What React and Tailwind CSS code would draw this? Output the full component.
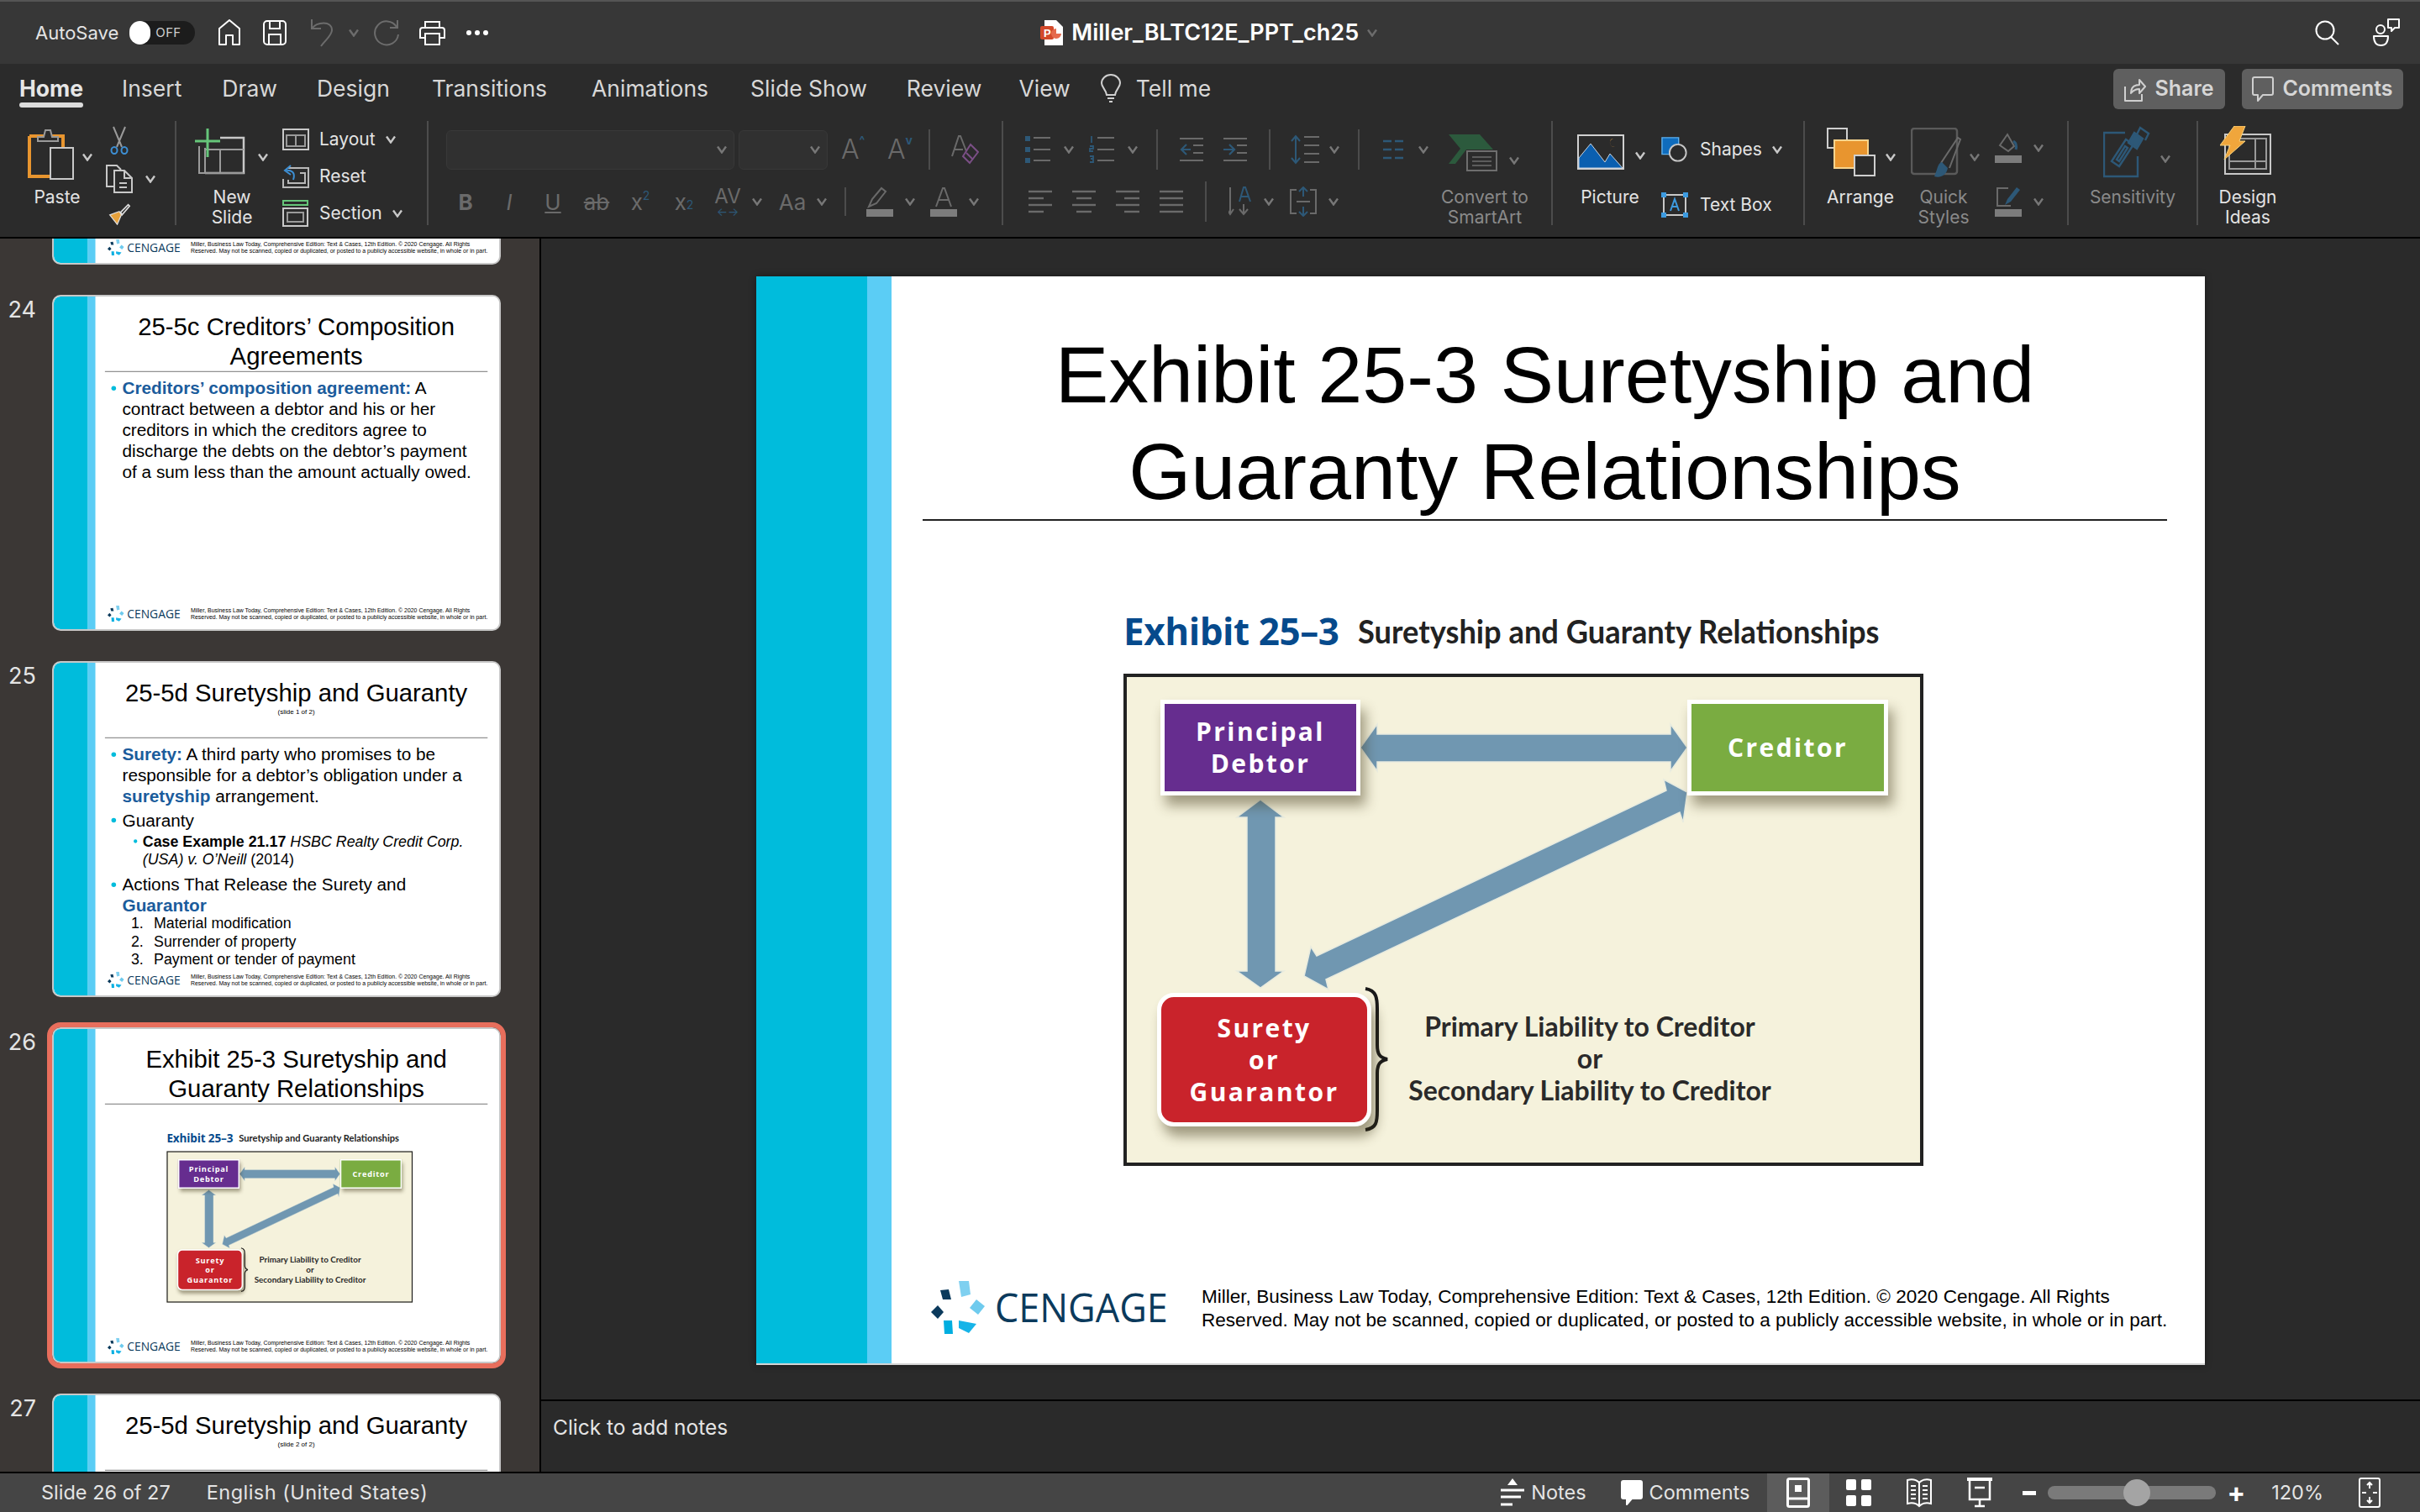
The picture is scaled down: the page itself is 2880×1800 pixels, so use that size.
import React from "react";

const ui = "font-['Inter',sans-serif]";

/* ---------- small icons ---------- */
const Chev = ({ className = "text-[#c8c8c8]" }) => (
  <svg className={`w-[12px] h-[10px] shrink-0 ${className}`} viewBox="0 0 12 10" fill="none" stroke="currentColor" strokeWidth="2.4"><path d="M1 1.5 6 8.5 11 1.5" /></svg>
);
const Cell = ({ className = "", children }) => (
  <div className={`flex items-center justify-center shrink-0 ${className}`}>{children}</div>
);
const Vr = ({ className = "" }) => <div className={`w-[2px] shrink-0 bg-[#4c4c4c] ${className}`} />;

const Lines = ({ rows, className = "text-[#6a6a6a]" }) => (
  <svg className={`w-[30px] h-[30px] ${className}`} viewBox="0 0 30 30" fill="none" stroke="currentColor" strokeWidth="2.4">
    {rows.map((r, i) => <path key={i} d={`M${r[0]} ${3 + i * 8}H${r[1]}`} />)}
  </svg>
);

const Home = () => (
  <svg className="w-[28px] h-[32px] text-white" viewBox="0 0 28 32" fill="none" stroke="currentColor" strokeWidth="2"><path d="M2 30V11L14 1l12 10v19h-8V19h-8v11z" strokeLinejoin="round" /></svg>
);
const Save = () => (
  <svg className="w-[28px] h-[30px] text-white" viewBox="0 0 28 30" fill="none" stroke="currentColor" strokeWidth="2"><rect x="1" y="1" width="26" height="28" rx="4" /><path d="M8 1v9h12V1M7 29V17h14v12" /></svg>
);
const Undo = () => (
  <svg className="w-[28px] h-[34px] text-[#6c6c6c]" viewBox="0 0 28 34" fill="none" stroke="currentColor" strokeWidth="2"><path d="M2 1v11h11M2 12C8 4 26 2 26 14c0 6-8 12-13 19" /></svg>
);
const Redo = () => (
  <svg className="w-[32px] h-[32px] text-[#6c6c6c]" viewBox="0 0 32 32" fill="none" stroke="currentColor" strokeWidth="2"><path d="M28 9A14 14 0 1 0 30 18M29 1v9h-9" /></svg>
);
const Print = () => (
  <svg className="w-[33px] h-[30px] text-white" viewBox="0 0 33 30" fill="none" stroke="currentColor" strokeWidth="2"><path d="M8 9V2h17v7M8 21H2V12q0-3 3-3h23q3 0 3 3v9h-6" /><rect x="8" y="16" width="17" height="13" /></svg>
);
const Search = () => (
  <svg className="w-[30px] h-[30px] text-white" viewBox="0 0 30 30" fill="none" stroke="currentColor" strokeWidth="2"><circle cx="12" cy="12" r="10.5" /><path d="M19 20l9 9" /></svg>
);
const Collab = () => (
  <svg className="w-[34px] h-[34px] text-white" viewBox="0 0 34 34" fill="none" stroke="currentColor" strokeWidth="2"><circle cx="10" cy="13" r="5" /><path d="M2 21h17q0 11-8.500 11T2 21zM19 1h13v10h-5l-4 4v-4h-4z" strokeLinejoin="round" /></svg>
);
const PptIcon = () => (
  <svg className="w-[27px] h-[30px]" viewBox="0 0 27 30">
    <path d="M5 0h14l8 8v22H5z" fill="#fff" />
    <rect x="0" y="7" width="16" height="16" rx="2" fill="#d2492a" />
    <text x="4" y="20" fontSize="13" fontWeight="700" fill="#fff" fontFamily="Liberation Sans">P</text>
    <path d="M19 10a6 6 0 1 0 6 6h-6z" fill="#e56a4c" />
  </svg>
);
const Bulb = () => (
  <svg className="w-[24px] h-[36px] text-[#d0d0d0]" viewBox="0 0 24 36" fill="none" stroke="currentColor" strokeWidth="2"><path d="M7 25C6 18 1 16 1 11a11 10 0 0 1 22 0c0 5-5 7-6 14z" /><path d="M8 29h8M10 33h4" /></svg>
);
const ShareIcon = () => (
  <svg className="w-[26px] h-[30px] text-[#cfcfcf]" viewBox="0 0 26 30" fill="none" stroke="currentColor" strokeWidth="2"><path d="M1 12v17h20v-8M8 20c0-7 4-10 10-10V4l7 8-7 8v-5c-4 0-7 1-10 5z" strokeLinejoin="round" /></svg>
);
const CommentIcon = ({ className = "w-[26px] h-[30px] text-[#cfcfcf]", solid }) => (
  <svg className={className} viewBox="0 0 26 30" fill={solid ? "currentColor" : "none"} stroke="currentColor" strokeWidth="2"><path d="M3 1h20q2 0 2 2v17q0 2-2 2H13l-6 7v-7H3q-2 0-2-2V3q0-2 2-2z" strokeLinejoin="round" /></svg>
);

/* ribbon icons */
const PasteIcon = () => (
  <svg className="w-[56px] h-[62px] shrink-0" viewBox="0 0 56 62" fill="none">
    <path d="M2 10h40v54M2 10v48h26" stroke="#e8952f" strokeWidth="4" />
    <path d="M12 16v-5h7l2-8h6l2 8h7v5z" fill="#2b2b2b" stroke="#9a9a9a" strokeWidth="2" />
    <rect x="27" y="24" width="27" height="37" fill="#2b2b2b" stroke="#c8c8c8" strokeWidth="2" />
  </svg>
);
const Scissors = () => (
  <svg className="w-[24px] h-[34px]" viewBox="0 0 24 34" fill="none" strokeWidth="2"><path d="M5 1l10 24M19 1L9 25" stroke="#9a9a9a" /><ellipse cx="6" cy="29" rx="3.500" ry="4" stroke="#3d8fd4" /><ellipse cx="18" cy="29" rx="3.500" ry="4" stroke="#3d8fd4" /></svg>
);
const CopyIcon = () => (
  <svg className="w-[32px] h-[34px] text-[#c8c8c8]" viewBox="0 0 32 34" fill="none" stroke="currentColor" strokeWidth="2"><path d="M10 26H1V1h12l5 5" /><path d="M10 7h12l9 9v17H10zM22 7v9h9M16 22h9M16 27h9" /></svg>
);
const BrushIcon = () => (
  <svg className="w-[32px] h-[32px]" viewBox="0 0 32 32" fill="none"><path d="M2 17l14-5 3 5-6 14z" fill="#e8a23c" stroke="#e0e0e0" strokeWidth="1.500" /><path d="M18 13l11-11 2 2-11 13z" stroke="#e0e0e0" strokeWidth="2" /></svg>
);
const NewSlideIcon = () => (
  <svg className="w-[62px] h-[56px] shrink-0" viewBox="0 0 62 56" fill="none">
    <path d="M12 54h46V12H30M4 54" stroke="#c8c8c8" strokeWidth="2.500" />
    <path d="M5 22v32h53M12 24v30M12 26h46M30 26v28" stroke="#9a9a9a" strokeWidth="2" />
    <path d="M15 1v34M0 16h30" stroke="#66c67a" strokeWidth="3" />
  </svg>
);
const LayoutIcon = () => (
  <svg className="w-[32px] h-[26px] text-[#c8c8c8]" viewBox="0 0 32 26" fill="none" stroke="currentColor" strokeWidth="2"><rect x="1" y="1" width="30" height="24" /><path d="M5 8h22v13H5zM16 8v13" stroke="#9a9a9a" /></svg>
);
const ResetIcon = () => (
  <svg className="w-[32px] h-[28px]" viewBox="0 0 32 28" fill="none" strokeWidth="2"><path d="M7 4h24v23H1V17M21 10h6v12H7v-4" stroke="#b8b8b8" /><path d="M10 1L3 7l7 5M3 7c8-1 13 2 10 11" stroke="#3d8fd4" /></svg>
);
const SectionIcon = () => (
  <svg className="w-[32px] h-[32px]" viewBox="0 0 32 32" fill="none" strokeWidth="2"><rect x="1" y="1" width="29" height="5" stroke="#66c67a" /><rect x="1" y="10" width="29" height="21" stroke="#c8c8c8" /><rect x="6" y="15" width="19" height="11" stroke="#9a9a9a" /></svg>
);
const ClearFmt = () => (
  <svg className="w-[34px] h-[36px]" viewBox="0 0 34 36" fill="none" strokeWidth="2"><path d="M2 26L10 2h2l7 18M5 18h10" stroke="#6a6a6a" /><path d="M24 12l9 9-10 13-8-8z" stroke="#7b4f86" /><path d="M19 22l8 8" stroke="#7b4f86" /></svg>
);
const Highlighter = () => (
  <svg className="w-[32px] h-[36px]" viewBox="0 0 32 36" fill="none"><path d="M3 24l4-9L18 2l5 4-11 14z" stroke="#6a6a6a" strokeWidth="2" /><rect y="27" width="32" height="9" fill="#7c7c7c" /></svg>
);
const FontColor = () => (
  <svg className="w-[32px] h-[36px]" viewBox="0 0 32 36" fill="none"><path d="M7 24L15 2h2l8 22M10 16h12" stroke="#6a6a6a" strokeWidth="2" /><rect y="27" width="32" height="9" fill="#7c7c7c" /></svg>
);
const Bullets = () => (
  <svg className="w-[30px] h-[34px]" viewBox="0 0 30 34"><g fill="#2d5877"><rect width="6" height="6" y="1" /><rect width="6" height="6" y="14" /><rect width="6" height="6" y="27" /></g><path d="M10 3h20M10 17h20M10 30h20" stroke="#6a6a6a" strokeWidth="2.200" /></svg>
);
const Numbers = () => (
  <svg className="w-[30px] h-[34px]" viewBox="0 0 30 34"><path d="M3 1v8M1 13h4v3H1v3h4M1 25h4v3H2h3v4H1" stroke="#2d5877" strokeWidth="1.800" fill="none" /><path d="M10 3h20M10 17h20M10 30h20" stroke="#6a6a6a" strokeWidth="2.200" /></svg>
);
const Indent = ({ flip }) => (
  <svg className="w-[28px] h-[30px]" viewBox="0 0 28 30" fill="none"><path d="M0 2h28M16 10h12M16 19h12M0 28h28" stroke="#6a6a6a" strokeWidth="2.200" /><path d={flip ? "M0 15h12M7 9l6 6-6 6" : "M13 15H2M8 9l-6 6 6 6"} stroke="#2d5877" strokeWidth="2.200" /></svg>
);
const LineSpacing = () => (
  <svg className="w-[34px] h-[36px]" viewBox="0 0 34 36" fill="none"><path d="M6 3v30M1 8l5-6 5 6M1 28l5 6 5-6" stroke="#2d5877" strokeWidth="2" /><path d="M16 3h18M16 13h18M16 23h18M16 33h18" stroke="#6a6a6a" strokeWidth="2.200" /></svg>
);
const Columns = () => (
  <svg className="w-[24px] h-[26px]" viewBox="0 0 24 26" fill="none" stroke="#2d5877" strokeWidth="2.400"><path d="M0 3h10M14 3h10M0 13h10M14 13h10M0 23h10M14 23h10" /></svg>
);
const SmartArt = () => (
  <svg className="w-[58px] h-[44px] shrink-0" viewBox="0 0 58 44" fill="none">
    <polygon points="0,0 37,0 53,18 21,18 8,35 0,35 14,17" fill="#2c5a3d" />
    <rect x="22" y="20" width="35" height="23" fill="#2b2b2b" stroke="#6e6e6e" strokeWidth="2" />
    <path d="M28 27h23M28 32h23M28 37h23" stroke="#6e6e6e" strokeWidth="1.600" />
  </svg>
);
const TextDir = () => (
  <svg className="w-[28px] h-[36px]" viewBox="0 0 28 36" fill="none"><path d="M2 1v32M-2 27l4 6 4-6M18 21v12M13 27l5 6 5-6" stroke="#6a6a6a" strokeWidth="2" /><path d="M13 18L18 1h2l6 17M15 12h9" stroke="#2d5877" strokeWidth="2" /></svg>
);
const AlignText = () => (
  <svg className="w-[32px] h-[36px]" viewBox="0 0 32 36" fill="none"><path d="M8 4H1v28h7M24 4h7v28h-7M8 18h16" stroke="#6a6a6a" strokeWidth="2" /><path d="M16 1v11M11 6l5-5 5 5M16 24v11M11 30l5 5 5-5" stroke="#2d5877" strokeWidth="2" /></svg>
);
const Picture = () => (
  <svg className="w-[56px] h-[42px] shrink-0" viewBox="0 0 56 42">
    <rect x="1" y="1" width="54" height="40" fill="#2b2b2b" stroke="#d0d0d0" strokeWidth="2" />
    <path d="M2 40V28L16 11l17 22 6-10 15 17z" fill="#0a5fb0" stroke="#c8d4e0" strokeWidth="1" />
    <path d="M43 5a5 5 0 0 0 2 10q-6 0-6-5t4-5z" fill="#eda64a" />
  </svg>
);
const Shapes = () => (
  <svg className="w-[34px] h-[32px]" viewBox="0 0 34 32"><path d="M1 1h21v21H1z" fill="#0f6cbd" stroke="#5db0ee" strokeWidth="1.500" /><circle cx="21" cy="20" r="10.500" fill="#2b2b2b" stroke="#c8c8c8" strokeWidth="2" /></svg>
);
const TextBoxIcon = () => (
  <svg className="w-[32px] h-[30px]" viewBox="0 0 32 30" fill="none"><rect x="3" y="3" width="26" height="24" stroke="#c8c8c8" strokeWidth="2" /><g fill="#3d9be0"><rect width="6" height="6" /><rect x="26" width="6" height="6" /><rect y="24" width="6" height="6" /><rect x="26" y="24" width="6" height="6" /></g><path d="M11 22l5-14 5 14M13 17h6" stroke="#3d9be0" strokeWidth="2" /></svg>
);
const Arrange = () => (
  <svg className="w-[58px] h-[58px] shrink-0" viewBox="0 0 58 58"><rect x="1" y="1" width="23" height="23" fill="#2b2b2b" stroke="#cfcfcf" strokeWidth="2" /><rect x="9" y="15" width="40" height="33" fill="#e8952f" stroke="#f6d48e" strokeWidth="2" /><rect x="33" y="33" width="24" height="24" fill="#2b2b2b" stroke="#cfcfcf" strokeWidth="2" /></svg>
);
const QuickStyles = () => (
  <svg className="w-[62px] h-[62px] shrink-0" viewBox="0 0 62 62" fill="none"><rect x="1" y="1" width="54" height="54" rx="3" stroke="#5a5a5a" strokeWidth="2.500" /><path d="M36 42l20-30 3 2-13 34" stroke="#6a6a6a" strokeWidth="2" /><path d="M28 58c6 2 14 0 16-10l-7-7c-5 1-5 8-9 17z" fill="#2d5877" /></svg>
);
const FillIcon = () => (
  <svg className="w-[32px] h-[36px]" viewBox="0 0 32 36" fill="none"><path d="M6 15l9-13 8 14-7 6z" stroke="#6a6a6a" strokeWidth="2" /><path d="M22 10q5 3 3 10" stroke="#2d5877" strokeWidth="3" /><rect y="27" width="32" height="9" fill="#7c7c7c" /></svg>
);
const PenIcon = () => (
  <svg className="w-[32px] h-[36px]" viewBox="0 0 32 36" fill="none"><path d="M16 2H3v21h16" stroke="#6a6a6a" strokeWidth="2" /><path d="M12 22l3-7L26 1l4 3-11 14z" fill="#2d5877" /><rect y="27" width="32" height="9" fill="#7c7c7c" /></svg>
);
const Sensitivity = () => (
  <svg className="w-[56px] h-[62px] shrink-0" viewBox="0 0 56 62" fill="none" stroke="#2d5877" strokeWidth="2.400">
    <path d="M26 8H1v52h40V36" />
    <path d="M10 42l17-26 9 6-17 26z M16 40l10-16 3 2-10 16z" />
    <path d="M30 20l7-12 10 7-7 12z" fill="#2d5877" />
    <path d="M40 10l4-8 10 7-4 8" />
  </svg>
);
const DesignIdeas = () => (
  <svg className="w-[62px] h-[58px]" viewBox="0 0 62 58" fill="none">
    <rect x="6" y="10" width="54" height="47" stroke="#c8c8c8" strokeWidth="2" />
    <path d="M11 15h44v36H11zM42 15v36M11 42h44" stroke="#9a9a9a" strokeWidth="2" />
    <path d="M17 0h13l-7 18h7L5 40l7-17H0z" fill="#f0a63c" stroke="#f7d27e" strokeWidth="1" />
  </svg>
);

/* status bar icons */
const NotesIcon = () => (
  <svg className="w-[28px] h-[34px] text-white" viewBox="0 0 28 34" fill="currentColor"><path d="M14 0l6 8H8z" /><path d="M0 14h28M0 22h24M0 31h14" stroke="currentColor" strokeWidth="3" fill="none" /></svg>
);
const NormalIcon = () => (
  <svg className="w-[28px] h-[36px] text-white" viewBox="0 0 28 36" fill="none" stroke="currentColor" strokeWidth="3"><rect x="1.500" y="1.500" width="25" height="33" rx="2" /><path d="M1 25h26" /><rect x="10" y="9" width="8" height="8" fill="currentColor" stroke="none" /></svg>
);
const SorterIcon = () => (
  <svg className="w-[30px] h-[32px] text-white" viewBox="0 0 30 32" fill="currentColor"><rect width="12" height="13" rx="2" /><rect x="18" width="12" height="13" rx="2" /><rect y="19" width="12" height="13" rx="2" /><rect x="18" y="19" width="12" height="13" rx="2" /></svg>
);
const ReadIcon = () => (
  <svg className="w-[30px] h-[36px] text-white" viewBox="0 0 30 36" fill="none" stroke="currentColor" strokeWidth="2"><path d="M15 6C11 2 5 2 1 3v28c4-1 10-1 14 3 4-4 10-4 14-3V3c-4-1-10-1-14 3zM15 6v28M5 10h6M5 15h6M5 20h6M5 25h6M19 10h6M19 15h6M19 20h6M19 25h6" /></svg>
);
const ShowIcon = () => (
  <svg className="w-[30px] h-[36px] text-white" viewBox="0 0 30 36" fill="none" stroke="currentColor" strokeWidth="2.500"><path d="M0 2h30" strokeWidth="4" /><path d="M3 2v24h24V2M15 26v8M9 34h12" /><path d="M9 12h12" /></svg>
);
const FitIcon = () => (
  <svg className="w-[26px] h-[36px] text-white" viewBox="0 0 26 36" fill="none" stroke="currentColor" strokeWidth="2"><rect x="1" y="1" width="24" height="34" rx="2" /><path d="M13 6v7M10 9l3-3 3 3M13 30v-7M10 27l3 3 3-3M4 18h5M17 18h5" /></svg>
);

/* ---------- cengage footer ---------- */
const Logo = () => (
  <svg className="w-[64px] h-[63px] shrink-0" viewBox="0 0 64 63">
    <path d="M33 0l12 0 2 16-11 3z" fill="#7fd0f0" />
    <path d="M11 11l10-1 3 12-10 0z" fill="#0b3a5c" />
    <path d="M54 22l10 8-8 10-10-8z" fill="#6fcbee" />
    <path d="M8 29l7 8-7 8-8-8z" fill="#0b3a5c" />
    <path d="M15 47h10l1 16-10 0z" fill="#00aee0" />
    <path d="M33 47l21 4-9 11-12-6z" fill="#17b4e8" />
  </svg>
);

const Footer = () => (
  <div className="h-[134px] shrink-0 flex items-center pl-[10px]">
    <Logo />
    <div className="ml-[12px] w-[205px] text-[47px] leading-none text-[#0b3a5c] font-['Open_Sans',sans-serif] scale-x-[0.956] origin-left whitespace-nowrap">CENGAGE</div>
    <div className="ml-[41px] mt-[4px] text-[22.550px] leading-[28px] whitespace-nowrap">
      Miller, Business Law Today, Comprehensive Edition: Text &amp; Cases, 12th Edition. © 2020 Cengage. All Rights<br />
      Reserved. May not be scanned, copied or duplicated, or posted to a publicly accessible website, in whole or in part.
    </div>
  </div>
);

/* ---------- slide ---------- */
const Slide = ({ title, sub, children }) => (
  <div className="flex w-[1724px] h-[1294px] bg-white text-black font-['Liberation_Sans',sans-serif]">
    <div className="w-[132px] shrink-0 bg-[#00bcdc]" />
    <div className="w-[29px] shrink-0 bg-[#5bcdf5]" />
    <div className="flex-1 min-w-0 flex flex-col pl-[37px] pr-[45px]">
      <div className="h-[291px] shrink-0 pt-[60px] border-b-2 border-[#222] text-center text-[95.300px] leading-[115px] whitespace-nowrap">
        {title}
        {sub && <div className="text-[26px] leading-[30px] mt-[-2px]">{sub}</div>}
      </div>
      <div className="flex-1 min-h-0">{children}</div>
      <Footer />
    </div>
  </div>
);

const Dot = () => <div className="w-[18px] h-[18px] rounded-full bg-[#00bcdc] shrink-0" />;
const B = ({ children }) => <b className="text-[#1b5c9c]">{children}</b>;

const Body24 = () => (
  <div className="flex pt-[23px] pl-[25px] text-[67.500px] leading-[81px] whitespace-nowrap">
    <div className="pt-[32px]"><Dot /></div>
    <div className="ml-[24px]">
      <B>Creditors’ composition agreement:</B> A<br />
      contract between a debtor and his or her<br />
      creditors in which the creditors agree to<br />
      discharge the debts on the debtor’s payment<br />
      of a sum less than the amount actually owed.
    </div>
  </div>
);

const Body25 = () => (
  <div className="pt-[23px] pl-[25px] text-[67.500px] leading-[81px] whitespace-nowrap">
    <div className="flex">
      <div className="pt-[32px]"><Dot /></div>
      <div className="ml-[24px]"><B>Surety:</B> A third party who promises to be<br />responsible for a debtor’s obligation under a<br /><B>suretyship</B> arrangement.</div>
    </div>
    <div className="flex mt-[12px]">
      <div className="pt-[32px]"><Dot /></div>
      <div className="ml-[24px]">Guaranty</div>
    </div>
    <div className="flex mt-[6px] ml-[86px] text-[58px] leading-[69px]">
      <div className="pt-[28px]"><div className="w-[14px] h-[14px] rounded-full bg-[#00bcdc]" /></div>
      <div className="ml-[21px]"><b>Case Example 21.17</b> <i>HSBC Realty Credit Corp.<br />(USA) v. O’Neill</i> (2014)</div>
    </div>
    <div className="flex mt-[24px]">
      <div className="pt-[32px]"><Dot /></div>
      <div className="ml-[24px]">Actions That Release the Surety and<br /><B>Guarantor</B></div>
    </div>
    <div className="ml-[76px] -mt-[6px] text-[58px] leading-[70px]">
      <div className="flex"><span className="w-[88px]">1.</span>Material modification</div>
      <div className="flex"><span className="w-[88px]">2.</span>Surrender of property</div>
      <div className="flex"><span className="w-[88px]">3.</span>Payment or tender of payment</div>
    </div>
  </div>
);

const Party = ({ className, children }) => (
  <div className={`absolute flex items-center justify-center text-center text-white font-bold text-[30px] leading-[38px] tracking-[0.08em] font-['Open_Sans',sans-serif] border-[5px] border-white shadow-[6px_12px_14px_rgba(60,50,20,0.45)] ${className}`}>
    <div>{children}</div>
  </div>
);

const Exhibit = () => (
  <div className="pt-[105px] pl-[239px]">
    <div className="h-[52px] flex items-center whitespace-nowrap">
      <span className="text-[44px] font-bold text-[#064a8c] font-['Open_Sans',sans-serif] tracking-[-0.01em]">Exhibit 25–3</span>
      <span className="ml-[23px] inline-block text-[39px] font-bold text-[#222] font-['Lato',sans-serif] origin-left scale-x-[0.93]">Suretyship and Guaranty Relationships</span>
    </div>
    <div className="relative mt-[25px] w-[952px] h-[586px] border-[4px] border-[#222] bg-[#f5f2dc]">
      <svg className="absolute inset-0 w-[944px] h-[578px]" viewBox="0 0 944 578">
        <g fill="#7097b1" stroke="#e8ebdf" strokeWidth="1.500">
          <polygon points="278,84 298,56 298,68 647,68 647,56 667,84 647,112 647,101 298,101 298,112" />
          <polygon points="159,146 187,167 177,167 177,350 187,350 159,370 131,350 143,350 143,167 131,167" />
          <polygon points="667,137 662,173 658,161 237,360 240,372 211,356 219,321 226,332 642,135 639,122" />
        </g>
        <path d="M284 371C297 373 298 382 298 395V438C298 449 301 453 310 455C301 457 298 461 298 472V516C298 530 297 537 284 539" fill="none" stroke="#1a1a1a" strokeWidth="4" />
      </svg>
      <Party className="left-[40px] top-[27px] w-[238px] h-[114px] bg-[#662d8f]">Principal<br />Debtor</Party>
      <Party className="left-[667px] top-[27px] w-[239px] h-[114px] bg-[#7aac41]">Creditor</Party>
      <Party className="left-[36px] top-[376px] w-[255px] h-[159px] rounded-[20px] bg-[#c9232b]">Surety<br />or<br />Guarantor</Party>
      <div className="absolute left-[301px] top-[397px] w-[500px] text-center text-[32px] leading-[38px] font-bold text-[#2a2a2a] font-['Lato',sans-serif] whitespace-nowrap">
        Primary Liability to Creditor<br />or<br />Secondary Liability to Creditor
      </div>
    </div>
  </div>
);

const slide26 = { title: <>Exhibit 25-3 Suretyship and<br />Guaranty Relationships</> };

const Thumb = ({ n, selected, children }) => (
  <div className="flex h-[436px] shrink-0">
    <div className={`w-[43px] pt-[1px] text-right text-[27px] leading-[34px] text-[#e4e4e4] ${ui}`}>{n}</div>
    <div className={`ml-[19px] w-[534px] h-[400px] rounded-[10px] overflow-hidden border-[2px] border-[#c8c8c8] bg-white ${selected ? "outline-[6px] outline-[#e86e5c] overflow-visible" : ""}`}>
      <div className="w-[530px] h-[396px] rounded-[8px] overflow-hidden">
        <div className="w-[1724px] h-[1294px] origin-top-left scale-[0.3075]">{children}</div>
      </div>
    </div>
  </div>
);

const tabs = [
  ["Insert", ""],
  ["Draw", "ml-[48px]"],
  ["Design", "ml-[47px]"],
  ["Transitions", "ml-[50px]"],
  ["Animations", "ml-[53px]"],
  ["Slide Show", "ml-[50px]"],
  ["Review", "ml-[47px]"],
  ["View", "ml-[44px]"],
];

const Lbl = ({ className = "text-[#e4e4e4]", children }) => (
  <div className={`text-[21px] leading-[24px] text-center whitespace-nowrap ${className}`}>{children}</div>
);
const Big = ({ className = "", icon, label, labelClass }) => (
  <div className={`flex flex-col shrink-0 ${className}`}>
    <div className="h-[79px] shrink-0 pt-[8px] w-max flex items-start gap-[8px]">{icon}</div>
    <Lbl className={labelClass}>{label}</Lbl>
  </div>
);
const SideItem = ({ icon, label, chev, textClass = "ml-[12px]" }) => (
  <div className="flex items-center h-[44px] shrink-0">
    <div className="w-[32px] flex justify-center">{icon}</div>
    <span className={`text-[21px] text-[#e4e4e4] whitespace-nowrap ${textClass}`}>{label}</span>
    {chev && <div className="ml-[12px]"><Chev /></div>}
  </div>
);
const GlyphA = ({ up }) => (
  <span className="relative flex items-start text-[#6a6a6a] text-[32px] leading-[36px] font-light w-[34px]">
    A<span className="text-[#2d5877] text-[14px] leading-[14px] font-bold">{up ? "^" : "v"}</span>
  </span>
);
const dim = "text-[#6a6a6a]";

export default function App() {
  return (
    <div className={`w-[2880px] h-[1800px] overflow-hidden flex flex-col bg-[#2a2a2a] ${ui}`}>
      {/* title bar */}
      <div className="h-[76px] shrink-0 bg-[#373737] border-t-[2px] border-[#555] flex items-center">
        <span className="ml-[42px] text-[22px] text-[#e4e4e4]">AutoSave</span>
        <div className="ml-[13px] w-[78px] h-[28px] rounded-full bg-[#1c1c1c] flex items-center">
          <div className="w-[25px] h-[28px] rounded-full bg-white" />
          <span className="ml-[6px] text-[15px] text-[#cfcfcf] tracking-wide">OFF</span>
        </div>
        <div className="ml-[27px]"><Home /></div>
        <div className="ml-[26px]"><Save /></div>
        <div className="ml-[28px]"><Undo /></div>
        <div className="ml-[18px]"><Chev className="text-[#6c6c6c]" /></div>
        <div className="ml-[17px]"><Redo /></div>
        <div className="ml-[22px]"><Print /></div>
        <span className="ml-[24px] flex gap-[4px]"><i className="w-[6px] h-[6px] rounded-full bg-white" /><i className="w-[6px] h-[6px] rounded-full bg-white" /><i className="w-[6px] h-[6px] rounded-full bg-white" /></span>
        <div className="ml-[657px]"><PptIcon /></div>
        <span className="ml-[10px] text-[27px] font-semibold text-white">Miller_BLTC12E_PPT_ch25</span>
        <div className="ml-[10px]"><Chev className="text-[#6c6c6c]" /></div>
        <div className="ml-auto"><Search /></div>
        <div className="ml-[38px] mr-[23px]"><Collab /></div>
      </div>

      {/* ribbon */}
      <div className="h-[208px] shrink-0 bg-[#2b2b2b] border-b-[2px] border-black">
        <div className="flex items-center h-[60px] pl-[23px] text-[26.500px] text-[#d8d8d8]">
          <div className="relative font-bold text-[#e6e6e6]">Home<div className="absolute left-0 right-0 top-[36px] h-[6px] rounded-full bg-[#dcdcdc]" /></div>
          <div className="flex ml-[46px]">
            {tabs.map(([t, m]) => <span key={t} className={`whitespace-nowrap ${m}`}>{t}</span>)}
          </div>
          <div className="ml-[36px]"><Bulb /></div>
          <span className="ml-[18px]">Tell me</span>
          <div className="ml-auto flex gap-[20px] mr-[20px] text-[25px] font-semibold text-[#d6d6d6]">
            <div className="w-[133px] h-[48px] rounded-[6px] bg-[#5f5f5f] flex items-center justify-center gap-[10px]"><ShareIcon />Share</div>
            <div className="w-[192px] h-[48px] rounded-[6px] bg-[#5f5f5f] flex items-center justify-center gap-[10px]"><CommentIcon />Comments</div>
          </div>
        </div>

        <div className="flex h-[124px] mt-[8px]">
          {/* clipboard */}
          <div className="w-[208px] shrink-0 flex">
            <Big className="ml-[33px] w-[70px]" icon={<><PasteIcon /><div className="mt-[30px] ml-[1px]"><Chev /></div></>} label="Paste" />
            <div className="ml-[23px] flex flex-col items-start pt-[6px] gap-[12px]">
              <div className="ml-[4px]"><Scissors /></div>
              <div className="flex items-center gap-[15px]"><CopyIcon /><Chev /></div>
              <BrushIcon />
            </div>
          </div>
          <Vr />
          {/* slides */}
          <div className="w-[298px] shrink-0 flex">
            <Big className="ml-[22px] w-[88px]" icon={<><NewSlideIcon /><div className="mt-[30px] ml-[5px]"><Chev /></div></>} label={<>New<br />Slide</>} />
            <div className="ml-[16px] flex flex-col">
              <SideItem icon={<LayoutIcon />} label="Layout" chev />
              <SideItem icon={<ResetIcon />} label="Reset" />
              <SideItem icon={<SectionIcon />} label="Section" chev />
            </div>
          </div>
          <Vr />
          {/* font */}
          <div className="w-[682px] shrink-0 flex flex-col">
            <div className="h-[68px] flex items-center pl-[21px]">
              <div className="w-[343px] h-[47px] rounded-[6px] bg-[#303030] border border-[#383838] flex items-center justify-end pr-[8px]"><Chev className="text-[#777]" /></div>
              <div className="ml-[5px] w-[106px] h-[47px] rounded-[6px] bg-[#303030] border border-[#383838] flex items-center justify-end pr-[8px]"><Chev className="text-[#777]" /></div>
              <div className="ml-[16px]"><GlyphA up /></div>
              <div className="ml-[21px]"><GlyphA /></div>
              <Vr className="h-[48px] ml-[15px]" />
              <div className="ml-[24px]"><ClearFmt /></div>
            </div>
            <div className={`h-[56px] flex items-center pl-[18px] ${dim}`}>
              <Cell className="w-[52px] text-[26px] font-bold">B</Cell>
              <Cell className="w-[52px] text-[26px] italic">I</Cell>
              <Cell className="w-[52px] text-[26px] underline">U</Cell>
              <Cell className="w-[52px] text-[26px] line-through">ab</Cell>
              <Cell className="w-[52px] text-[26px]">x<sup className="text-[14px] text-[#2d5877]">2</sup></Cell>
              <Cell className="w-[52px] text-[26px]">x<sub className="text-[14px] text-[#2d5877]">2</sub></Cell>
              <Cell className="w-[52px] flex-col text-[24px] leading-[24px]">AV<span className="text-[14px] leading-[12px] text-[#2d5877]">←→</span></Cell>
              <Cell className="w-[18px]"><Chev className="text-[#777]" /></Cell>
              <Cell className="w-[48px] ml-[9px] text-[26px]">Aa</Cell>
              <Cell className="w-[22px]"><Chev className="text-[#777]" /></Cell>
              <Vr className="h-[34px] ml-[16px]" />
              <div className="ml-[24px]"><Highlighter /></div>
              <div className="ml-[14px]"><Chev className="text-[#777]" /></div>
              <div className="ml-[18px]"><FontColor /></div>
              <div className="ml-[14px]"><Chev className="text-[#777]" /></div>
            </div>
          </div>
          <Vr />
          {/* paragraph */}
          <div className="w-[652px] shrink-0 flex">
            <div className="w-[512px] flex flex-col">
              <div className="h-[68px] flex items-center pl-[26px]">
                <Bullets /><div className="ml-[16px]"><Chev className="text-[#777]" /></div>
                <div className="ml-[18px]"><Numbers /></div><div className="ml-[16px]"><Chev className="text-[#777]" /></div>
                <Vr className="h-[48px] ml-[22px]" />
                <div className="ml-[26px]"><Indent /></div>
                <div className="ml-[24px]"><Indent flip /></div>
                <Vr className="h-[48px] ml-[26px]" />
                <div className="ml-[24px]"><LineSpacing /></div><div className="ml-[12px]"><Chev className="text-[#777]" /></div>
                <Vr className="h-[48px] ml-[22px]" />
                <div className="ml-[28px]"><Columns /></div><div className="ml-[18px]"><Chev className="text-[#777]" /></div>
              </div>
              <div className="h-[56px] flex items-center pl-[30px]">
                <Lines rows={[[0, 28], [0, 18], [0, 28], [0, 18]]} />
                <div className="ml-[22px]"><Lines rows={[[0, 28], [5, 23], [0, 28], [5, 23]]} /></div>
                <div className="ml-[22px]"><Lines rows={[[0, 28], [10, 28], [0, 28], [10, 28]]} /></div>
                <div className="ml-[22px]"><Lines rows={[[0, 28], [0, 28], [0, 28], [0, 28]]} /></div>
                <Vr className="h-[48px] ml-[24px]" />
                <div className="ml-[26px]"><TextDir /></div><div className="ml-[14px]"><Chev className="text-[#777]" /></div>
                <div className="ml-[19px]"><AlignText /></div><div className="ml-[14px]"><Chev className="text-[#777]" /></div>
              </div>
            </div>
            <div className="flex flex-col w-[120px]">
              <div className="h-[79px] shrink-0 pt-[16px] w-max flex items-start pl-[18px] gap-[14px]"><SmartArt /><div className="mt-[26px]"><Chev className="text-[#777]" /></div></div>
              <Lbl className="text-[#8a8a8a] w-[150px] -ml-[14px]">Convert to<br />SmartArt</Lbl>
            </div>
          </div>
          <Vr />
          {/* insert */}
          <div className="w-[298px] shrink-0 flex">
            <Big className="ml-[29px] w-[78px]" icon={<div className="flex mt-[8px]"><Picture /><div className="mt-[20px] ml-[13px]"><Chev /></div></div>} label="Picture" />
            <div className="ml-[22px] flex flex-col pt-[12px] gap-[22px]">
              <SideItem icon={<Shapes />} label="Shapes" chev textClass="ml-[14px]" />
              <SideItem icon={<TextBoxIcon />} label="Text Box" textClass="ml-[14px]" />
            </div>
          </div>
          <Vr />
          {/* arrange */}
          <div className="w-[312px] shrink-0 flex">
            <Big className="ml-[26px] w-[76px]" icon={<><Arrange /><div className="mt-[30px] ml-[4px]"><Chev /></div></>} label="Arrange" />
            <Big className="ml-[24px] w-[78px]" icon={<><QuickStyles /><div className="mt-[30px]"><Chev className="text-[#777]" /></div></>} label={<>Quick<br />Styles</>} labelClass="text-[#8a8a8a]" />
            <div className="ml-[22px] flex flex-col pt-[14px] gap-[28px]">
              <div className="flex items-center gap-[14px]"><FillIcon /><Chev className="text-[#777]" /></div>
              <div className="flex items-center gap-[14px]"><PenIcon /><Chev className="text-[#777]" /></div>
            </div>
          </div>
          <Vr />
          {/* sensitivity */}
          <div className="w-[152px] shrink-0 flex flex-col">
            <div className="h-[79px] shrink-0 pt-[6px] pl-[41px] flex items-start gap-[12px]"><Sensitivity /><div className="mt-[34px]"><Chev className="text-[#777]" /></div></div>
            <Lbl className="text-[#8a8a8a]">Sensitivity</Lbl>
          </div>
          <Vr />
          {/* design ideas */}
          <div className="w-[120px] shrink-0 flex flex-col">
            <div className="h-[79px] shrink-0 pt-[6px] pl-[26px]"><DesignIdeas /></div>
            <Lbl className="text-[#e4e4e4] w-[118px]">Design<br />Ideas</Lbl>
          </div>
        </div>
      </div>

      {/* workspace */}
      <div className="flex-1 min-h-0 flex">
        <div className="w-[642px] shrink-0 bg-[#3b3735] border-r-[2px] border-black box-content overflow-hidden">
          <div className="-mt-[369px]">
            <Thumb n=""><Slide title="" /></Thumb>
            <Thumb n="24"><Slide title={<>25-5c Creditors’ Composition<br />Agreements</>}><Body24 /></Slide></Thumb>
            <Thumb n="25"><Slide title="25-5d Suretyship and Guaranty" sub="(slide 1 of 2)"><Body25 /></Slide></Thumb>
            <Thumb n="26" selected><Slide {...slide26}><Exhibit /></Slide></Thumb>
            <Thumb n="27"><Slide title="25-5d Suretyship and Guaranty" sub="(slide 2 of 2)" /></Thumb>
          </div>
        </div>
        <div className="flex-1 min-w-0 flex flex-col">
          <div className="flex-1 min-h-0 flex items-center justify-center pt-[4px]">
            <div className="border-b-[2px] border-[#d4d4d4] shadow-[0_0_8px_rgba(0,0,0,0.4)]">
              <Slide {...slide26}><Exhibit /></Slide>
            </div>
          </div>
          <div className="h-[86px] shrink-0 border-t-[2px] border-black pt-[16px] pl-[14px] text-[24.500px] leading-[30px] text-[#e4e4e4]">Click to add notes</div>
        </div>
      </div>

      {/* status bar */}
      <div className="h-[48px] shrink-0 border-t-[2px] border-black bg-[#454545] flex items-center text-[23.500px] text-[#e4e4e4]">
        <span className="ml-[49px]">Slide 26 of 27</span>
        <span className="ml-[43px] tracking-[0.02em]">English (United States)</span>
        <div className="ml-auto flex items-center h-full">
          <NotesIcon />
          <span className="ml-[8px]">Notes</span>
          <div className="ml-[41px]"><CommentIcon className="w-[26px] h-[32px] text-white" solid /></div>
          <span className="ml-[8px]">Comments</span>
          <div className="ml-[21px] w-[74px] h-full bg-[#5c5c5c] flex items-center justify-center"><NormalIcon /></div>
          <div className="ml-[20px]"><SorterIcon /></div>
          <div className="ml-[42px]"><ReadIcon /></div>
          <div className="ml-[42px]"><ShowIcon /></div>
          <div className="ml-[36px] w-[16px] h-[5px] bg-white" />
          <div className="ml-[14px] relative w-[200px] h-[16px] rounded-full bg-[#7a7a7a]">
            <div className="absolute left-[90px] -top-[8px] w-[32px] h-[32px] rounded-full bg-[#a4a4a4]" />
          </div>
          <span className="ml-[13px] text-[32px] leading-none font-bold text-white">+</span>
          <span className="ml-[31px]">120%</span>
          <div className="ml-[42px] mr-[47px]"><FitIcon /></div>
        </div>
      </div>
    </div>
  );
}
